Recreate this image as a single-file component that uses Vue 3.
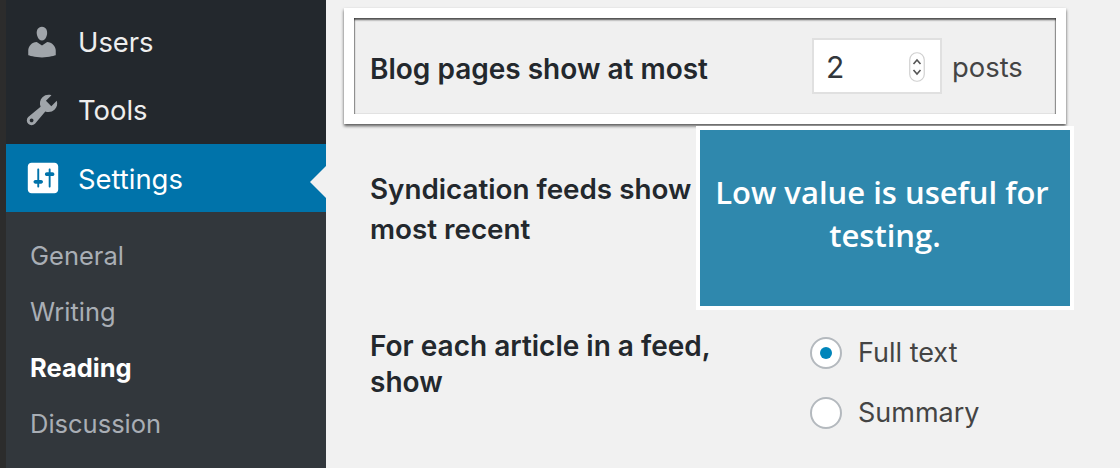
<script setup>
const submenu = [
  { label: 'General', current: false },
  { label: 'Writing', current: false },
  { label: 'Reading', current: true },
  { label: 'Discussion', current: false },
]
</script>

<template>
  <div class="page">
    <div class="strip"></div>
    <aside class="sidebar">
      <div class="menu-top">
        <div class="item first">
          <svg class="icon" viewBox="0 0 20 20"><path d="M10 9.25c-2.27 0-2.73-3.44-2.73-3.44C7 4.02 7.82 2 9.97 2c2.16 0 2.98 2.02 2.71 3.81 0 0-.41 3.44-2.68 3.44zm0 2.57L12.72 10c2.39 0 4.52 2.33 4.52 4.53v2.49s-3.65 1.13-7.24 1.13c-3.65 0-7.24-1.13-7.24-1.13v-2.49c0-2.25 1.94-4.48 4.47-4.48z"/></svg>
          <span>Users</span>
        </div>
        <div class="item">
          <svg class="icon" viewBox="0 0 20 20"><path d="M16.68 9.77c-1.34 1.34-3.3 1.67-4.95.99l-5.41 6.52c-.99.99-2.59.99-3.58 0s-.99-2.59 0-3.57l6.52-5.42c-.68-1.65-.35-3.61.99-4.95 1.28-1.28 3.12-1.62 4.72-1.06l-2.89 2.89 2.82 2.82 2.86-2.87c.53 1.58.18 3.39-1.08 4.65zM3.81 16.21c.4.39 1.04.39 1.43 0 .4-.4.4-1.04 0-1.43-.39-.4-1.03-.4-1.43 0-.39.39-.39 1.03 0 1.43z"/></svg>
          <span>Tools</span>
        </div>
      </div>
      <div class="item active">
        <svg class="icon" viewBox="0 0 20 20"><path d="M18 16V4c0-1.1-.9-2-2-2H4c-1.1 0-2 .9-2 2v12c0 1.1.9 2 2 2h12c1.1 0 2-.9 2-2zM8 11h1c.55 0 1 .45 1 1s-.45 1-1 1H8v1.5c0 .28-.22.5-.5.5s-.5-.22-.5-.5V13H6c-.55 0-1-.45-1-1s.45-1 1-1h1V5.5c0-.28.22-.5.5-.5s.5.22.5.5V11zm5-2h-1c-.55 0-1-.45-1-1s.45-1 1-1h1V5.5c0-.28.22-.5.5-.5s.5.22.5.5V7h1c.55 0 1 .45 1 1s-.45 1-1 1h-1v5.5c0 .28-.22.5-.5.5s-.5-.22-.5-.5V9z"/></svg>
        <span>Settings</span>
        <i class="arrow"></i>
      </div>
      <nav class="submenu">
        <div v-for="s in submenu" :key="s.label" class="sub" :class="{ current: s.current }">{{ s.label }}</div>
      </nav>
    </aside>

    <main class="main">
      <section class="highlight">
        <div class="hl-inner">
          <div class="label">Blog pages show at most</div>
          <div class="control">
            <div class="number">
              <span>2</span>
              <svg class="spin" viewBox="0 0 16 30">
                <rect x="0.75" y="0.75" width="14.5" height="28.5" rx="7" fill="#fff" stroke="#d0d0d0" stroke-width="1.2"/>
                <path d="M4.5 12 8 8l3.5 4M4.5 18 8 22l3.5-4" fill="none" stroke="#555" stroke-width="1.6"/>
              </svg>
            </div>
            <span class="unit">posts</span>
          </div>
        </div>
      </section>

      <div class="row feeds">
        <div class="label">Syndication feeds show<br>most recent</div>
      </div>

      <div class="row article">
        <div class="label">For each article in a feed,<br>show</div>
        <div class="radios">
          <div class="radio-row"><span class="radio on"></span><span class="radio-text">Full text</span></div>
          <div class="radio-row"><span class="radio"></span><span class="radio-text">Summary</span></div>
        </div>
      </div>

      <div class="tip"><span class="tip-first">Low value is useful for</span> testing.</div>
    </main>
  </div>
</template>

<style>
html, body { margin: 0; background: #f1f1f1; }
</style>

<style scoped>
.page {
  display: flex;
  width: 1120px;
  height: 468px;
  overflow: hidden;
  background: #f1f1f1;
  font-family: Inter, "Liberation Sans", sans-serif;
}
.strip { width: 6px; background: #2c2c2c; flex: none; }
.sidebar {
  width: 320px;
  flex: none;
  display: flex;
  flex-direction: column;
  background: #32373c;
}
.menu-top { background: #23282d; padding-top: 8px; }
.item {
  position: relative;
  display: flex;
  align-items: center;
  height: 68px;
  padding-left: 18px;
  font-size: 27.4px;
  color: #eeeeee;
}
.active span { position: relative; top: 1px; }
.icon {
  width: 38px;
  height: 38px;
  margin-right: 17px;
  margin-left: -1px;
  fill: #a0a5aa;
  flex: none;
}
.active { background: #0073aa; color: #fff; }
.active .icon { fill: #fff; margin-left: 0; margin-right: 16px; }
.arrow {
  position: absolute;
  right: 0;
  top: 22px;
  border: 16px solid transparent;
  border-left-width: 0;
  border-right-color: #f1f1f1;
}
.submenu { padding-top: 15px; }
.sub {
  height: 56px;
  line-height: 58px;
  padding-left: 24px;
  font-size: 25.5px;
  color: #a9aeb5;
}
.sub.current { color: #fff; font-weight: 700; }

.main { position: relative; flex: 1; padding-top: 8px; }
.highlight {
  width: 702px;
  height: 96px;
  margin-left: 18px;
  border: 10px solid #fff;
  box-shadow: 0 2px 3px rgba(0, 0, 0, .65);
}
.hl-inner {
  display: flex;
  align-items: center;
  height: 100%;
  padding-left: 16px;
  background: #f0f0f0;
  box-shadow: inset 0 2px 2px rgba(0, 0, 0, .65), inset 1px 0 1px rgba(0, 0, 0, .3), inset -1px 0 1px rgba(0, 0, 0, .3);
}
.hl-inner .label { padding-top: 6px; }
.label {
  width: 442px;
  flex: none;
  font-size: 28px;
  line-height: 40px;
  font-weight: 600;
  color: #23282d;
}
.feeds .label { font-size: 27.8px; }
.control { display: flex; align-items: center; }
.number {
  display: flex;
  align-items: center;
  justify-content: space-between;
  box-sizing: border-box;
  width: 130px;
  height: 56px;
  padding: 2px 15px 0 12px;
  background: #fff;
  border: 2px solid #e0e0e0;
  font-size: 30px;
  color: #32373c;
}
.spin { width: 16px; height: 30px; }
.unit { margin-left: 10px; padding-top: 2px; font-size: 27.4px; color: #444; }
.row { display: flex; margin-left: 44px; }
.feeds { padding-top: 45px; height: 152px; }
.article .label { line-height: 36px; padding-top: 7px; }
.radios { display: flex; flex-direction: column; gap: 28px; margin-top: 16px; margin-left: -2px; }
.radio-row {
  display: flex;
  align-items: center;
  height: 32px;
  gap: 16px;
  font-size: 27px;
  color: #444;
}
.radio-text { margin-top: -2px; }
.radio {
  box-sizing: border-box;
  display: flex;
  align-items: center;
  justify-content: center;
  width: 32px;
  height: 32px;
  border: 2px solid #b4b9be;
  border-radius: 50%;
  background: #fff;
}
.radio.on::before {
  content: "";
  width: 12px;
  height: 12px;
  border-radius: 50%;
  background: #0085ba;
}
.tip {
  position: absolute;
  left: 370px;
  top: 126px;
  box-sizing: border-box;
  width: 378px;
  height: 184px;
  padding: 41px 10px 0;
  border: 4px solid #fff;
  background: #2f88ad;
  color: #fff;
  font-family: "Open Sans", sans-serif;
  font-size: 31px;
  font-weight: 600;
  line-height: 43px;
  text-align: center;
}
.tip-first { display: inline-block; padding-right: 6px; }
</style>
